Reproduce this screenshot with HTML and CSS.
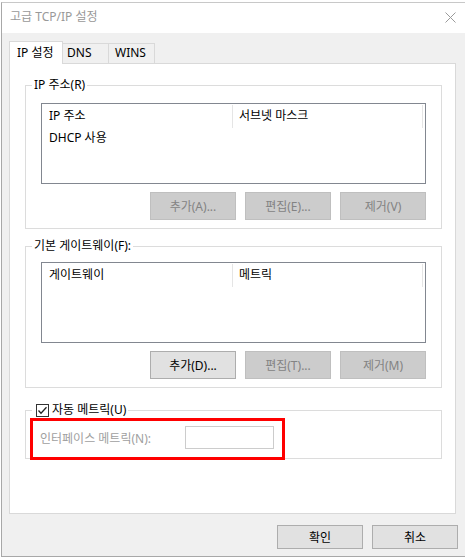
FILE: index.html
```html
<!DOCTYPE html>
<html lang="ko">
<head>
<meta charset="utf-8">
<title>고급 TCP/IP 설정</title>
<link rel="stylesheet" href="styles.css">
</head>
<body>
<div class="window">
  <div class="titlebar">
    <span class="title">고급 TCP/IP 설정</span>
    <svg class="close" width="11" height="11" viewBox="0 0 11 11"><path d="M0.5 0.5 L10.5 10.5 M10.5 0.5 L0.5 10.5" stroke="#9a9a9a" stroke-width="1" fill="none"/></svg>
  </div>
  <div class="client">
    <div class="tabs">
      <div class="tab tab-ip active">IP 설정</div>
      <div class="tab tab-dns">DNS</div>
      <div class="tab tab-wins">WINS</div>
    </div>
    <div class="panel">
      <fieldset class="group g1">
        <legend>IP 주소(R)</legend>
        <div class="list">
          <div class="list-head">
            <div class="col c1">IP 주소</div>
            <div class="col c2">서브넷 마스크</div>
          </div>
          <div class="row">DHCP 사용</div>
        </div>
        <div class="btns">
          <button class="btn" disabled>추가(A)...</button>
          <button class="btn" disabled>편집(E)...</button>
          <button class="btn" disabled>제거(V)</button>
        </div>
      </fieldset>
      <fieldset class="group g2">
        <legend>기본 게이트웨이(F):</legend>
        <div class="list">
          <div class="list-head">
            <div class="col c1">게이트웨이</div>
            <div class="col c2">메트릭</div>
          </div>
        </div>
        <div class="btns">
          <button class="btn">추가(D)...</button>
          <button class="btn" disabled>편집(T)...</button>
          <button class="btn" disabled>제거(M)</button>
        </div>
      </fieldset>
      <fieldset class="group g3">
        <legend class="check-legend">
          <svg class="checkbox" width="13" height="13" viewBox="0 0 13 13"><rect x="0.5" y="0.5" width="12" height="12" fill="#fff" stroke="#333"/><path d="M2.5 6.5 L5 9.2 L10.5 3.2" stroke="#222" stroke-width="1.3" fill="none"/></svg>
          <span>자동 메트릭(U)</span>
        </legend>
        <div class="metric-row">
          <span class="metric-label">인터페이스 메트릭(N):</span>
          <span class="metric-input"></span>
        </div>
        <div class="highlight"></div>
      </fieldset>
    </div>
    <div class="footer">
      <button class="btn btn-footer">확인</button>
      <button class="btn btn-footer">취소</button>
    </div>
  </div>
</div>
</body>
</html>
```
FILE: styles.css
```css
* { box-sizing: border-box; }
html, body { margin: 0; padding: 0; }
body {
  width: 465px;
  height: 558px;
  overflow: hidden;
  background: #ffffff;
  font-family: "Noto Sans", "Noto Sans CJK KR", sans-serif;
  font-size: 12px;
  color: #000;
}
.window {
  margin-top: 2px;
  margin-left: 1px;
  height: 555px;
  border-top: 1px solid #c8c8c8;
  border-left: 1px solid #a8a8a8;
  border-bottom: 1px solid #a8a8a8;
  background: #f0f0f0;
  display: flex;
  flex-direction: column;
}
.titlebar {
  height: 30px;
  flex: none;
  background: #fff;
  display: flex;
  align-items: center;
  justify-content: space-between;
  padding: 0 9px 2px 8px;
}
.title { color: #999; line-height: 16px; }
.close { display: block; }
.client {
  flex: 1;
  padding: 8px 7px 7px 7px;
  display: flex;
  flex-direction: column;
}
.tabs {
  display: flex;
  align-items: flex-end;
  height: 22px;
  position: relative;
  z-index: 1;
}
.tab {
  height: 20px;
  width: 47px;
  margin-left: -1px;
  border: 1px solid #d9d9d9;
  border-bottom: none;
  background: #f0f0f0;
  line-height: 18px;
}
.tab.active {
  height: 23px;
  width: 54px;
  margin-left: 0;
  margin-bottom: -1px;
  background: #fff;
  line-height: 21px;
  position: relative;
  z-index: 2;
}
.tab-ip { padding-left: 7px; }
.tab-dns { padding-left: 4px; }
.tab-wins { padding-left: 6px; }
.panel {
  width: 447px;
  height: 451px;
  flex: none;
  border: 1px solid #d9d9d9;
  background: #fff;
  padding: 13px 13px 0 15px;
}
.group {
  width: 417px;
  margin: 0;
  border: 1px solid #dcdcdc;
  padding: 10px 15px 8px 15px;
  min-width: 0;
}
.group legend {
  padding: 0 2px;
  margin-left: -9px;
  line-height: 16px;
}
.g2 { margin-top: 9px; padding-top: 8px; }
.g3 {
  margin-top: 14px;
  padding: 8px 15px 9px 14px;
  position: relative;
}
.g3 legend { margin-left: -8px; }
.check-legend { display: flex; align-items: center; }
.checkbox { display: block; margin-left: 2px; margin-right: 3px; }
.list {
  height: 81px;
  border: 1px solid #828790;
  background: #fff;
}
.list-head { display: flex; height: 24px; }
.col {
  margin-top: 1px;
  height: 23px;
  line-height: 22px;
  border-right: 1px solid #e5e5e5;
}
.c1 { width: 191px; padding-left: 7px; }
.c2 { width: 190px; padding-left: 6px; }
.row { height: 20px; line-height: 20px; padding-left: 7px; }
.btns {
  display: flex;
  justify-content: flex-end;
  gap: 9px;
  margin-top: 8px;
}
.btn {
  width: 86px;
  height: 28px;
  padding: 0;
  font: inherit;
  color: #000;
  background: #e1e1e1;
  border: 1px solid #adadad;
  border-radius: 0;
}
.btn:disabled {
  background: #cccccc;
  border-color: #bfbfbf;
  color: #838383;
}
.metric-row { display: flex; align-items: center; height: 23px; }
.metric-label { width: 145px; color: #a0a0a0; }
.metric-input {
  width: 89px;
  height: 23px;
  border: 1px solid #cccccc;
  background: #fff;
}
.highlight {
  position: absolute;
  left: 4px;
  top: 0;
  width: 255px;
  height: 42px;
  border: 3px solid #ff0000;
}
.footer {
  display: flex;
  justify-content: flex-end;
  gap: 9px;
  margin-top: 11px;
}
.btn-footer { height: 24px; }
```
